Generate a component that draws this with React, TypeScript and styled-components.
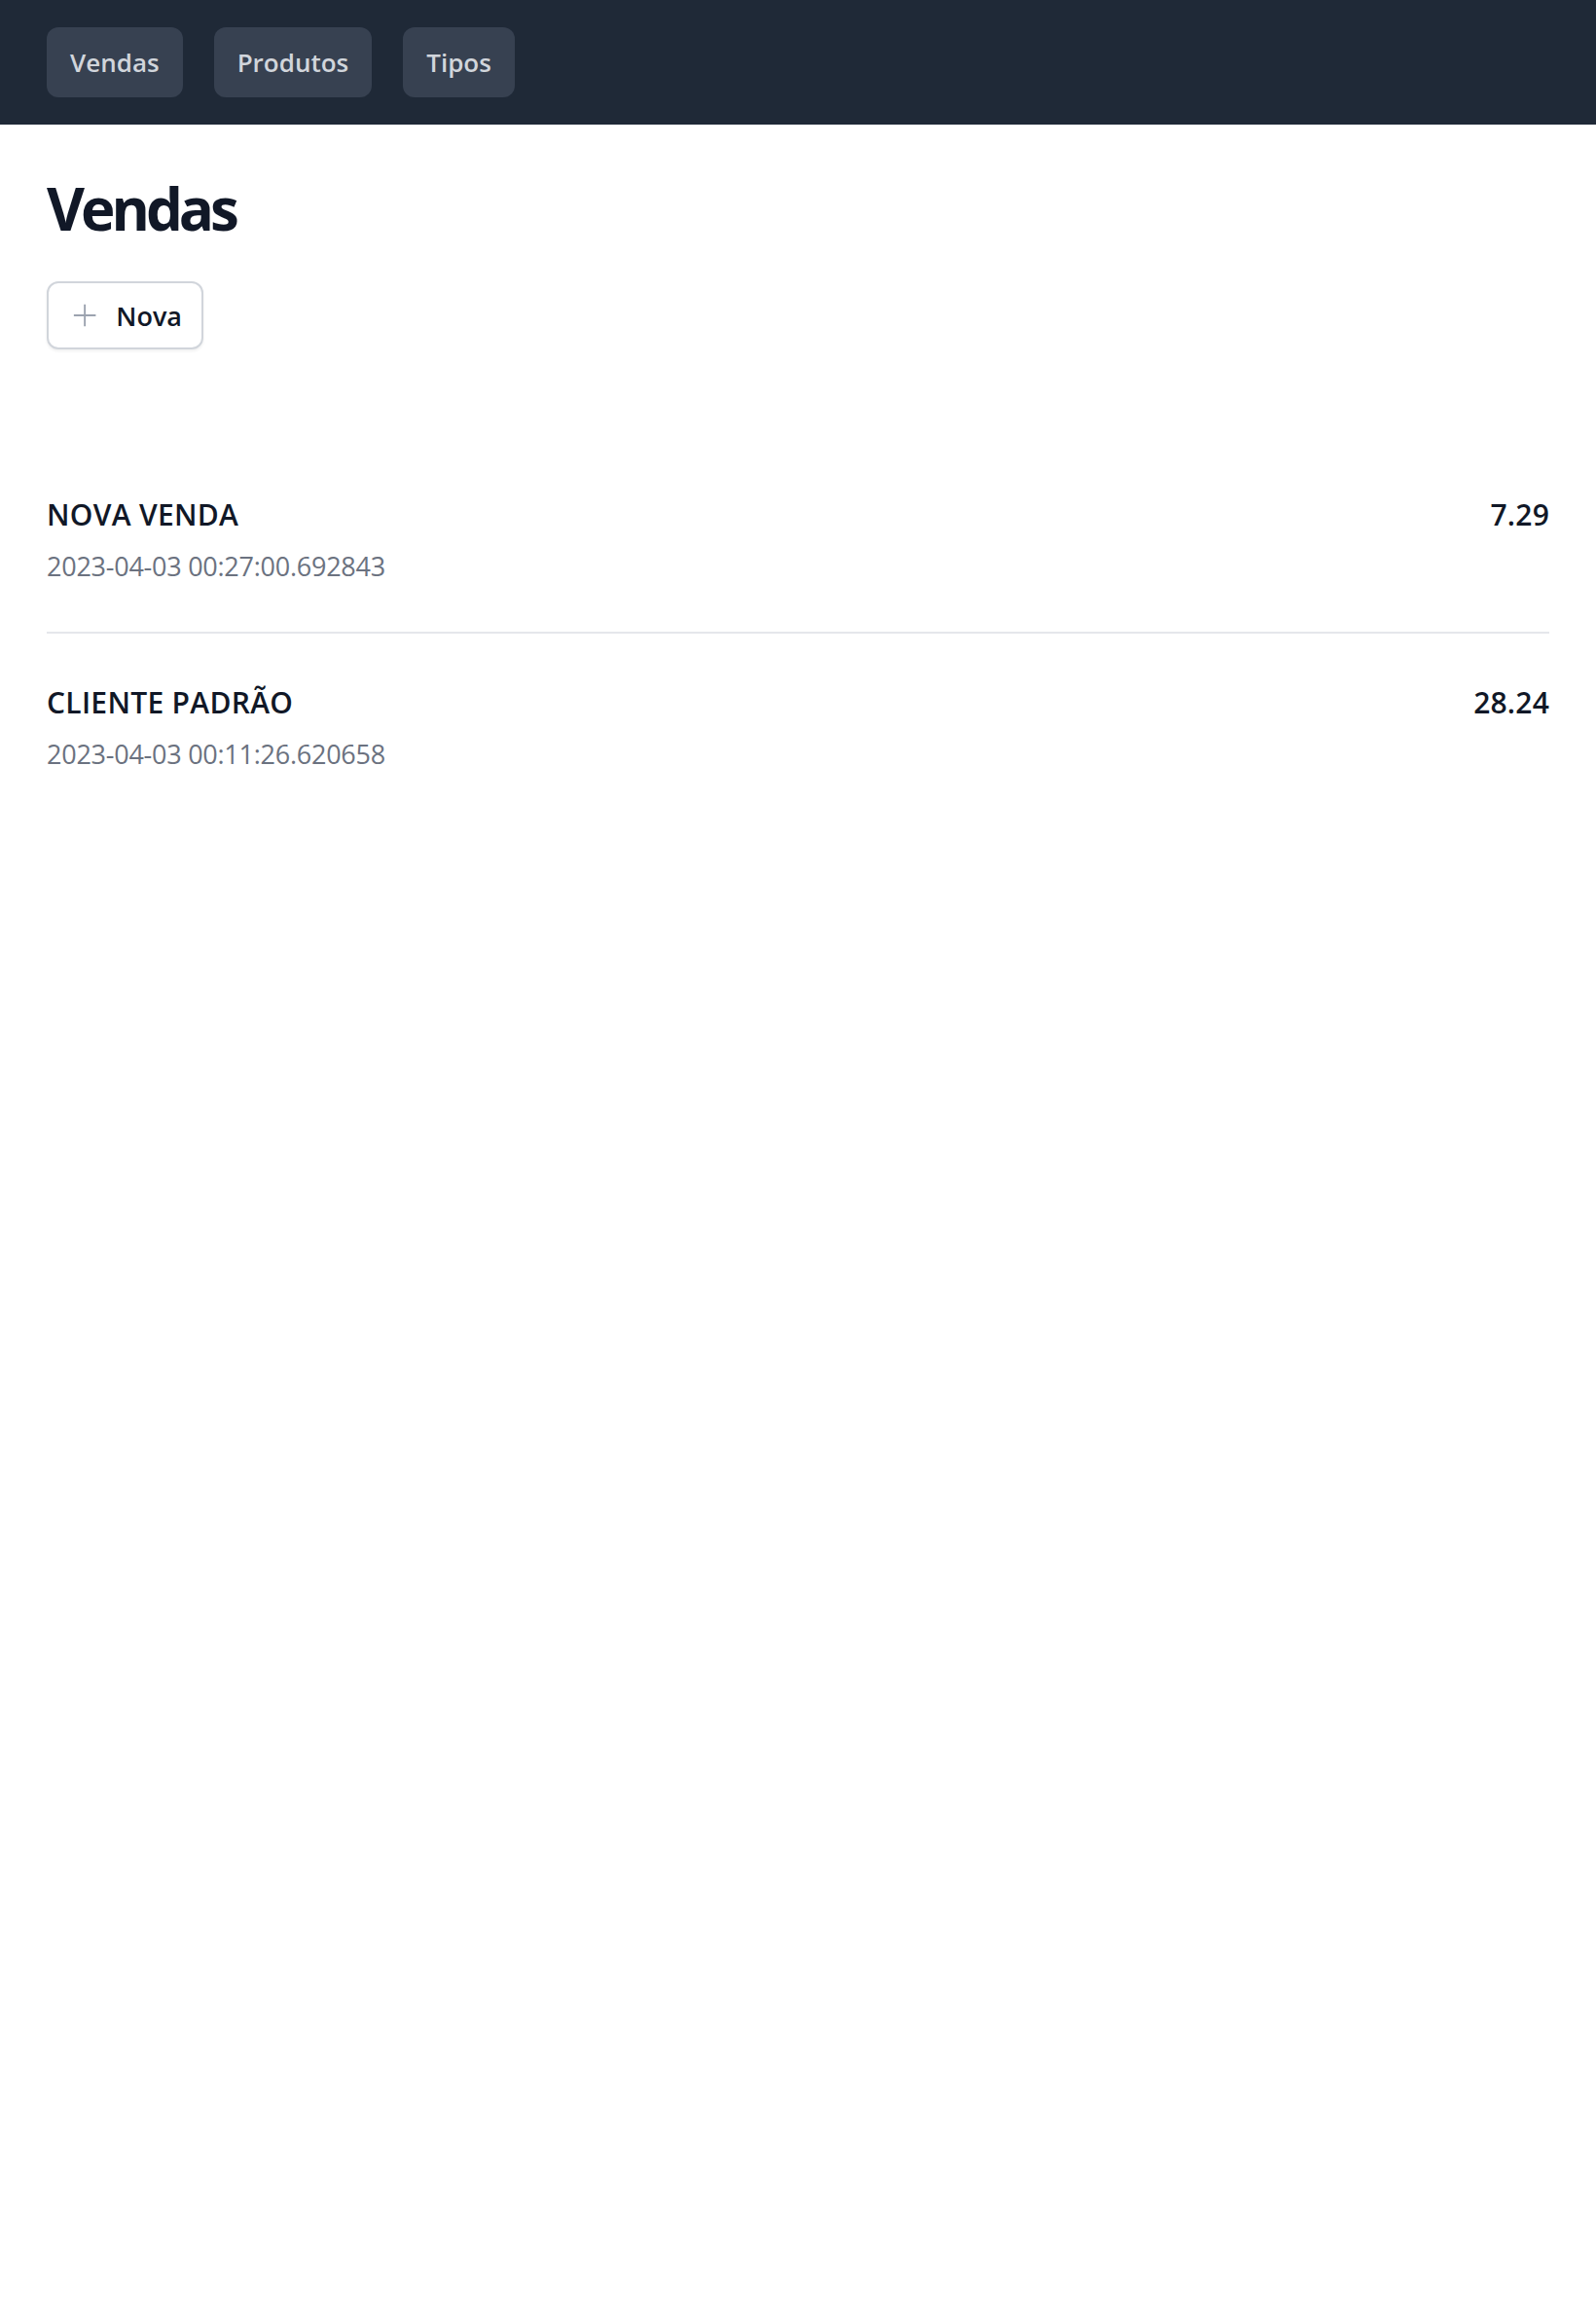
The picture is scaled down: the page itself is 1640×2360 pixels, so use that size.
import React from "react";
import styled, { createGlobalStyle } from "styled-components";

const Global = createGlobalStyle`
  html, body { margin: 0; padding: 0; background: #ffffff; }
  body { font-family: "Open Sans", "Noto Sans", sans-serif; color: #111827; }
  * { box-sizing: border-box; }
`;

const Header = styled.nav`
  background: #1f2937;
  height: 128px;
  padding: 28px 48px;
  display: flex;
  align-items: flex-start;
  gap: 32px;
`;

const NavButton = styled.button`
  height: 72px;
  padding: 0 24px;
  border: none;
  border-radius: 12px;
  background: #374151;
  color: #d1d5db;
  font-family: inherit;
  font-size: 26px;
  font-weight: 600;
  cursor: pointer;
`;

const Main = styled.main`
  padding: 0 48px;
`;

const Title = styled.h1`
  margin: 46px 0 0;
  font-size: 60px;
  line-height: 80px;
  font-weight: 700;
  letter-spacing: -4px;
  color: #111827;
`;

const NewButton = styled.button`
  margin-top: 35px;
  height: 70px;
  width: 161px;
  display: flex;
  align-items: center;
  gap: 20px;
  padding: 0 20px 0 25px;
  border: 2px solid #d1d5db;
  border-radius: 12px;
  background: #fff;
  box-shadow: 0 2px 3px rgba(0, 0, 0, 0.06);
  font-family: inherit;
  font-size: 27px;
  font-weight: 600;
  color: #111827;
  cursor: pointer;
`;

const List = styled.ul`
  list-style: none;
  margin: 99px 0 0;
  padding: 0;
`;

const Row = styled.li`
  display: flex;
  justify-content: space-between;
  align-items: flex-start;
  padding: 50px 0 47px;
  border-bottom: 2px solid #e5e7eb;
  &:last-child { border-bottom: none; }
`;

const Info = styled.div`
  display: flex;
  flex-direction: column;
  gap: 12px;
`;

const Name = styled.div`
  font-size: 30px;
  line-height: 42px;
  font-weight: 560;
  letter-spacing: 0.3px;
  color: #111827;
`;

const DateText = styled.div`
  font-size: 27px;
  line-height: 40px;
  letter-spacing: -0.25px;
  color: #6b7280;
`;

const Value = styled.div`
  font-size: 30px;
  line-height: 42px;
  font-weight: 560;
  letter-spacing: 0.2px;
  color: #111827;
`;

const PlusIcon = () => (
  <svg width="28" height="28" viewBox="0 0 28 28" fill="none" stroke="#9ca3af" strokeWidth="2.2">
    <path d="M14 1v26M1 14h26" />
  </svg>
);

const sales = [
  { name: "NOVA VENDA", date: "2023-04-03 00:27:00.692843", value: "7.29" },
  { name: "CLIENTE PADRÃO", date: "2023-04-03 00:11:26.620658", value: "28.24" },
];

export default function App() {
  return (
    <>
      <Global />
      <Header>
        <NavButton>Vendas</NavButton>
        <NavButton>Produtos</NavButton>
        <NavButton>Tipos</NavButton>
      </Header>
      <Main>
        <Title>Vendas</Title>
        <NewButton>
          <PlusIcon />
          Nova
        </NewButton>
        <List>
          {sales.map((s) => (
            <Row key={s.name}>
              <Info>
                <Name>{s.name}</Name>
                <DateText>{s.date}</DateText>
              </Info>
              <Value>{s.value}</Value>
            </Row>
          ))}
        </List>
      </Main>
    </>
  );
}
